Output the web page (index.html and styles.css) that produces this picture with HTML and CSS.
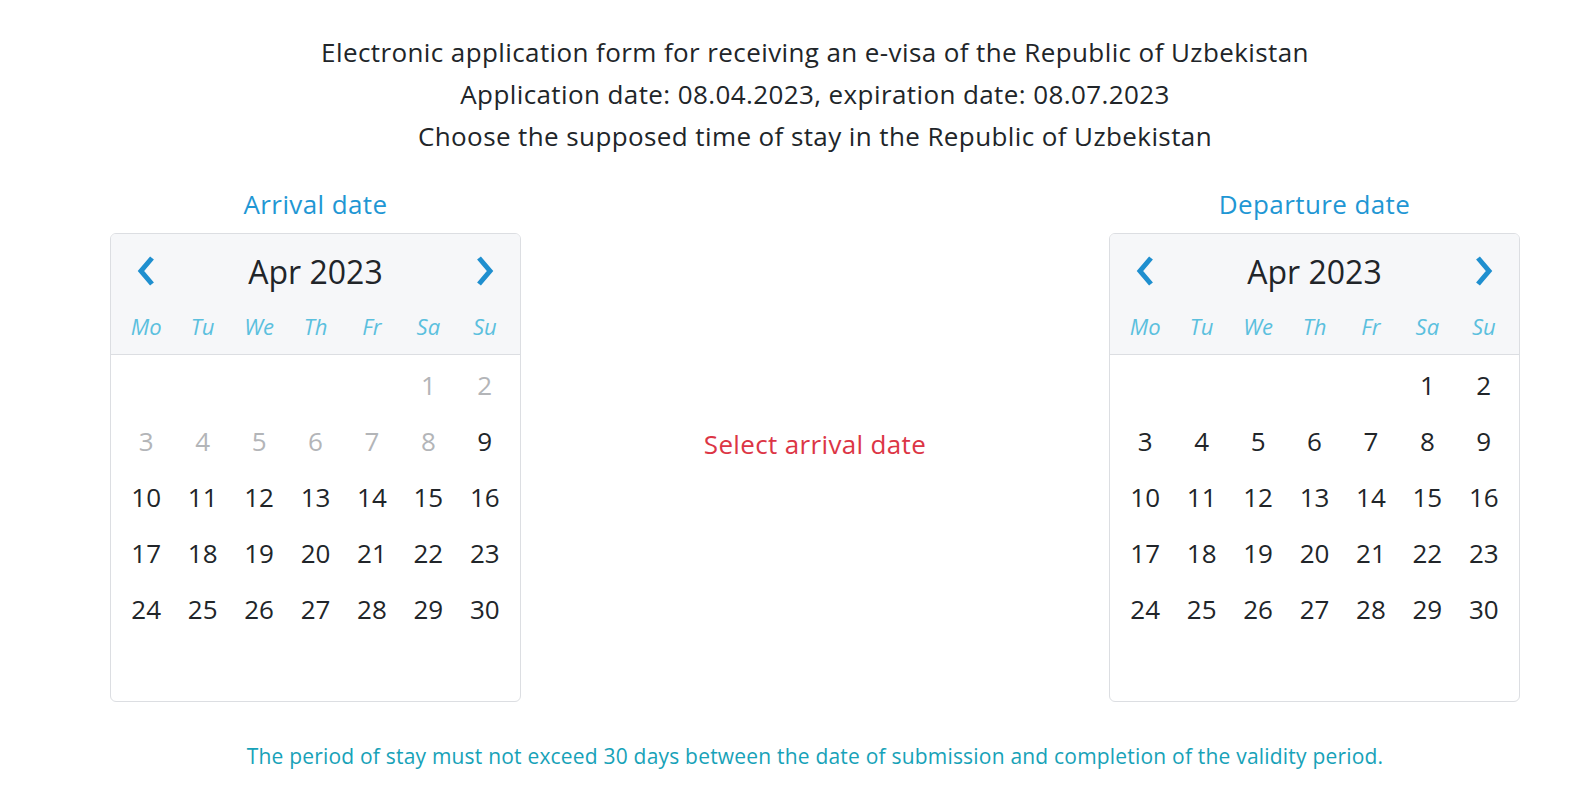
FILE: index.html
```html
<!DOCTYPE html>
<html lang="en">
<head>
  <meta charset="UTF-8">
  <meta name="viewport" content="width=device-width, initial-scale=1">
  <title>E-visa application</title>
  <link rel="stylesheet" href="styles.css">
</head>
<body>
  <div class="container">
    <div class="intro">
      <div>Electronic application form for receiving an e-visa of the Republic of Uzbekistan</div>
      <div>Application date: 08.04.2023, expiration date: 08.07.2023</div>
      <div>Choose the supposed time of stay in the Republic of Uzbekistan</div>
    </div>

    <div class="dates">
      <div class="date-col">
        <div class="date-label">Arrival date</div>
        <div class="calendar">
          <div class="cal-head">
            <div class="cal-nav">
              <span class="arrow"><svg width="20" height="32" viewBox="0 0 20 32"><polyline points="16,3 5,16 16,29" /></svg></span>
              <span class="month">Apr 2023</span>
              <span class="arrow"><svg width="20" height="32" viewBox="0 0 20 32"><polyline points="4,3 15,16 4,29" /></svg></span>
            </div>
            <div class="weekdays">
              <span>Mo</span><span>Tu</span><span>We</span><span>Th</span><span>Fr</span><span>Sa</span><span>Su</span>
            </div>
          </div>
          <div class="days">
            <span></span><span></span><span></span><span></span><span></span>
            <span class="off">1</span><span class="off">2</span>
            <span class="off">3</span><span class="off">4</span><span class="off">5</span><span class="off">6</span><span class="off">7</span><span class="off">8</span><span>9</span>
            <span>10</span><span>11</span><span>12</span><span>13</span><span>14</span><span>15</span><span>16</span>
            <span>17</span><span>18</span><span>19</span><span>20</span><span>21</span><span>22</span><span>23</span>
            <span>24</span><span>25</span><span>26</span><span>27</span><span>28</span><span>29</span><span>30</span>
            <span></span>
          </div>
        </div>
      </div>

      <div class="middle">Select arrival date</div>

      <div class="date-col">
        <div class="date-label">Departure date</div>
        <div class="calendar">
          <div class="cal-head">
            <div class="cal-nav">
              <span class="arrow"><svg width="20" height="32" viewBox="0 0 20 32"><polyline points="16,3 5,16 16,29" /></svg></span>
              <span class="month">Apr 2023</span>
              <span class="arrow"><svg width="20" height="32" viewBox="0 0 20 32"><polyline points="4,3 15,16 4,29" /></svg></span>
            </div>
            <div class="weekdays">
              <span>Mo</span><span>Tu</span><span>We</span><span>Th</span><span>Fr</span><span>Sa</span><span>Su</span>
            </div>
          </div>
          <div class="days">
            <span></span><span></span><span></span><span></span><span></span>
            <span>1</span><span>2</span>
            <span>3</span><span>4</span><span>5</span><span>6</span><span>7</span><span>8</span><span>9</span>
            <span>10</span><span>11</span><span>12</span><span>13</span><span>14</span><span>15</span><span>16</span>
            <span>17</span><span>18</span><span>19</span><span>20</span><span>21</span><span>22</span><span>23</span>
            <span>24</span><span>25</span><span>26</span><span>27</span><span>28</span><span>29</span><span>30</span>
            <span></span>
          </div>
        </div>
      </div>
    </div>

    <div class="note">The period of stay must not exceed 30 days between the date of submission and completion of the validity period.</div>
  </div>
</body>
</html>
```

FILE: styles.css
```css
body {
  font-family: 'Open Sans', 'Noto Sans', sans-serif;
  margin: 0;
  padding: 0;
  color: #212529;
  background: #fff;
}

.container {
  width: 1410px;
  margin-left: 110px;
  padding-top: 31px;
}

.intro {
  text-align: center;
  font-size: 26px;
  letter-spacing: 0.4px;
  line-height: 42px;
}

.dates {
  display: grid;
  grid-template-columns: 411px 1fr 411px;
  margin-top: 29px;
}

.date-label {
  text-align: center;
  font-size: 26px;
  letter-spacing: 0.4px;
  line-height: 36px;
  color: #1f97d4;
  margin-bottom: 11px;
}

.middle {
  align-self: center;
  text-align: center;
  font-size: 26px;
  letter-spacing: 0.35px;
  color: #dc3545;
}

.calendar {
  border: 1px solid #dcdee2;
  border-radius: 6px;
  overflow: hidden;
}

.cal-head {
  background: #f6f7f9;
  border-bottom: 1px solid #dcdee2;
  padding: 7px 7px 3px;
}

.cal-nav {
  display: grid;
  grid-template-columns: 1fr 5fr 1fr;
  height: 60px;
  align-items: center;
}

.arrow {
  display: flex;
  justify-content: center;
}

.arrow polyline {
  fill: none;
  stroke: #1f8fcf;
  stroke-width: 5;
}

.month {
  text-align: center;
  font-size: 32px;
}

.weekdays {
  display: grid;
  grid-template-columns: repeat(7, 1fr);
  height: 50px;
  align-items: center;
  text-align: center;
  font-style: italic;
  font-size: 22px;
  color: #5bc0de;
}

.days {
  display: grid;
  grid-template-columns: repeat(7, 1fr);
  grid-auto-rows: 56px;
  padding: 2px 7px 8px;
  align-items: center;
  text-align: center;
  font-size: 26px;
}

.days .off {
  color: #b3b5b8;
}

.note {
  text-align: center;
  font-size: 21px;
  letter-spacing: 0.2px;
  line-height: 30px;
  color: #17a2b8;
  margin-top: 39px;
}
```
